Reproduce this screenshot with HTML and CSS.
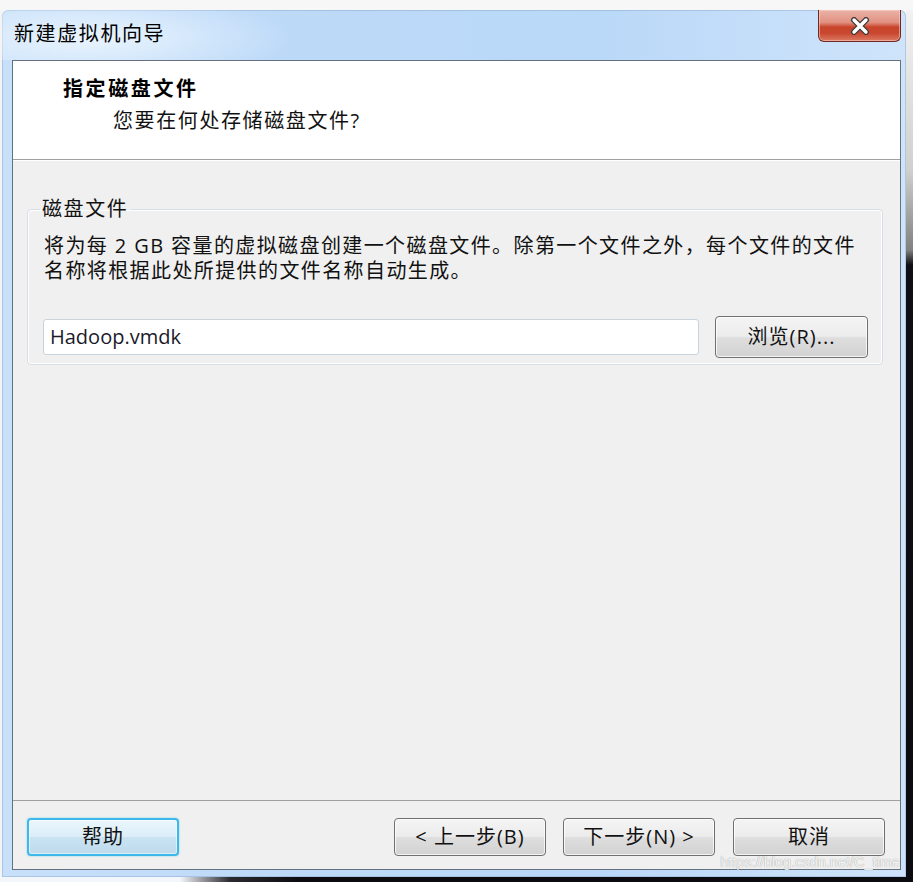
FILE: index.html
```html
<!DOCTYPE html>
<html lang="zh-CN">
<head>
<meta charset="utf-8">
<title>新建虚拟机向导</title>
<link rel="stylesheet" href="styles.css">
</head>
<body>
<div class="screen">
  <div class="top-strip"></div>
  <div class="row">
    <div class="left-strip"></div>
    <div class="window">
      <div class="titlebar">
        <span class="title">新建虚拟机向导</span>
        <button class="close" aria-label="关闭">
          <svg width="22" height="18" viewBox="0 0 22 18">
            <path d="M5 3 L17 15 M17 3 L5 15" stroke="#3b3b3b" stroke-width="6" stroke-linecap="round" fill="none"/>
            <path d="M5 3 L17 15 M17 3 L5 15" stroke="#ffffff" stroke-width="3.4" stroke-linecap="round" fill="none"/>
          </svg>
        </button>
      </div>
      <div class="client">
        <div class="header">
          <div class="heading">指定磁盘文件</div>
          <div class="subheading">您要在何处存储磁盘文件?</div>
        </div>
        <div class="content">
          <fieldset class="group">
            <legend class="group-label">磁盘文件</legend>
            <p class="desc">将为每 2 GB 容量的虚拟磁盘创建一个磁盘文件。除第一个文件之外，每个文件的文件<br>名称将根据此处所提供的文件名称自动生成。</p>
            <div class="file-row">
              <div class="input">Hadoop.vmdk</div>
              <button class="btn browse">浏览(R)...</button>
            </div>
          </fieldset>
        </div>
        <div class="footer">
          <button class="btn default">帮助</button>
          <div class="nav">
            <button class="btn">&lt; 上一步(B)</button>
            <button class="btn">下一步(N) &gt;</button>
            <button class="btn cancel">取消</button>
          </div>
          <span class="watermark">https://blog.csdn.net/C_time</span>
        </div>
      </div>
    </div>
    <div class="right-strip"></div>
  </div>
  <div class="bottom-strip"></div>
</div>
</body>
</html>
```
FILE: styles.css
```css
html, body {
  margin: 0;
  padding: 0;
}
body {
  width: 913px;
  height: 882px;
  overflow: hidden;
  background: #f7f7f7;
  font-family: "Open Sans", "Noto Sans CJK SC", sans-serif;
  color: #111;
}
.screen {
  display: flex;
  flex-direction: column;
  width: 913px;
  height: 882px;
}
.top-strip {
  height: 10px;
  background: #f7f7f7;
}
.row {
  display: flex;
  height: 867px;
}
.left-strip {
  width: 2px;
  background: #f4f4f4;
}
.right-strip {
  width: 7px;
  background: linear-gradient(to bottom, #f2f2f2 0px, #d0d0d0 160px, #808080 240px, #0e0e14 255px, #0b0b10 100%);
}
.bottom-strip {
  height: 5px;
  background: linear-gradient(to right, #f3f6fb 0px, #f3f6fb 180px, #2a2a30 230px, #0b0b10 300px, #0b0b10 100%);
}
.window {
  width: 904px;
  box-sizing: border-box;
  padding: 0 5px 7px 10px;
  display: flex;
  flex-direction: column;
  background: linear-gradient(to right, #c8e0fa 0px, #bcd9f8 300px, #bad8f8 600px, #cfe4fb 904px);
  border-radius: 6px 6px 0 0;
  box-shadow: inset 0 0 0 1px rgba(120, 150, 190, 0.35);
}
.titlebar {
  height: 50px;
  display: flex;
  justify-content: space-between;
  align-items: flex-start;
  background: radial-gradient(ellipse 200px 45px at 90px 28px, rgba(240, 248, 255, 0.85), rgba(240, 248, 255, 0) 100%);
  margin-left: -10px;
  padding-left: 12px;
}
.title {
  font-family: "Noto Sans CJK SC", sans-serif;
  font-size: 20px;
  letter-spacing: 1.6px;
  line-height: 26px;
  margin-top: 10px;
  color: #000;
}
.close {
  width: 83px;
  height: 32px;
  margin: 0;
  padding: 0;
  border: 1px solid #6e2a20;
  border-top: none;
  border-radius: 0 0 6px 6px;
  background: linear-gradient(to bottom, #eab3a8 0%, #e19080 40%, #c8452c 55%, #c9472f 75%, #dc7a64 100%);
  box-shadow: inset 0 0 0 1px rgba(255, 210, 200, 0.55);
  display: flex;
  align-items: center;
  justify-content: center;
}
.close svg {
  display: block;
  margin-top: 1px;
}
.client {
  flex: 1;
  display: flex;
  flex-direction: column;
  border: 1px solid #65717e;
  background: #f0f0f0;
  position: relative;
}
.header {
  height: 98px;
  background: #ffffff;
  border-bottom: 1px solid #a0a0a0;
  box-sizing: content-box;
  padding: 0;
}
.heading {
  font-family: "Noto Sans CJK SC", sans-serif;
  font-weight: bold;
  font-size: 20px;
  letter-spacing: 2.6px;
  line-height: 28px;
  margin-top: 13px;
  padding-left: 50px;
  color: #000;
}
.subheading {
  font-size: 20px;
  letter-spacing: 1.6px;
  line-height: 28px;
  margin-top: 5px;
  padding-left: 100px;
  color: #111;
}
.content {
  flex: 1;
  border-top: 1px solid #ffffff;
  padding: 0 17px 0 14px;
}
.group {
  margin: 35px 0 0 0;
  padding: 0 14px 6px 15px;
  border: 1px solid #d6dfe6;
  border-radius: 4px;
  box-shadow: inset 0 0 0 1px #ffffff;
}
.group-label {
  font-size: 20px;
  letter-spacing: 1.6px;
  line-height: 26px;
  padding: 0 2px;
  margin-left: -3px;
  color: #111;
}
.desc {
  margin: 11px 0 0 1px;
  font-size: 20px;
  letter-spacing: 1.4px;
  line-height: 25px;
  white-space: nowrap;
  color: #111;
}
.file-row {
  display: flex;
  align-items: center;
  justify-content: space-between;
  margin-top: 33px;
}
.input {
  width: 656px;
  height: 36px;
  box-sizing: border-box;
  background: #ffffff;
  border: 1px solid #c9d3dc;
  border-radius: 3px;
  padding-left: 6px;
  font-size: 20px;
  line-height: 33px;
  color: #1a1a2a;
}
.btn {
  width: 153px;
  height: 38px;
  box-sizing: border-box;
  margin: 0;
  padding: 0;
  border: 1px solid #707070;
  border-radius: 4px;
  background: linear-gradient(to bottom, #f4f4f4 0%, #ececec 48%, #dedede 52%, #d2d2d2 100%);
  box-shadow: inset 0 0 0 1px rgba(255, 255, 255, 0.75);
  font-family: "Open Sans", "Noto Sans CJK SC", sans-serif;
  font-size: 20px;
  letter-spacing: 1px;
  color: #111;
  line-height: 34px;
}
.browse {
  height: 42px;
}
.footer {
  height: 69px;
  box-sizing: border-box;
  border-top: 1px solid #a0a0a0;
  padding: 17px 15px 14px 14px;
  display: flex;
  justify-content: space-between;
  align-items: flex-start;
  position: relative;
}
.footer .btn {
  width: 152px;
}
.default {
  border: 2px solid #3cb9ea;
  background: linear-gradient(to bottom, #eaf6fc 0%, #dceef8 48%, #c9e3f2 52%, #bedbec 100%);
  box-shadow: 0 0 2px rgba(60, 185, 234, 0.6), inset 0 0 0 1px rgba(255, 255, 255, 0.5);
}
.nav {
  display: flex;
  gap: 17px;
}
.cancel {
  margin-left: 1px;
}
.watermark {
  position: absolute;
  right: 0px;
  bottom: -3px;
  font-family: "Liberation Sans", Arial, sans-serif;
  font-size: 14.5px;
  line-height: 20px;
  color: rgba(255, 255, 255, 0.9);
  text-shadow: 0 0 1px rgba(0, 0, 0, 0.45);
}
```
